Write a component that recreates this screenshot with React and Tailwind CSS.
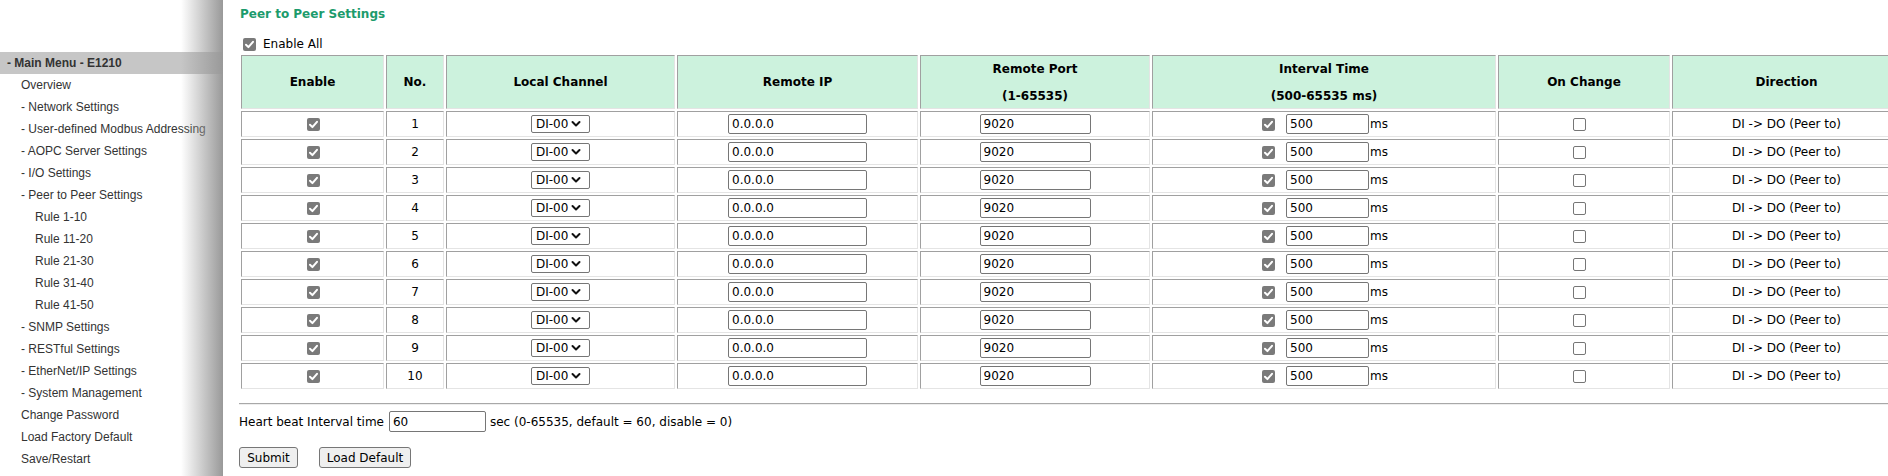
const menu = [
  { label: 'Overview', lvl: 1 },
  { label: '- Network Settings', lvl: 1 },
  { label: '- User-defined Modbus Addressing', lvl: 1 },
  { label: '- AOPC Server Settings', lvl: 1 },
  { label: '- I/O Settings', lvl: 1 },
  { label: '- Peer to Peer Settings', lvl: 1 },
  { label: 'Rule 1-10', lvl: 2 },
  { label: 'Rule 11-20', lvl: 2 },
  { label: 'Rule 21-30', lvl: 2 },
  { label: 'Rule 31-40', lvl: 2 },
  { label: 'Rule 41-50', lvl: 2 },
  { label: '- SNMP Settings', lvl: 1 },
  { label: '- RESTful Settings', lvl: 1 },
  { label: '- EtherNet/IP Settings', lvl: 1 },
  { label: '- System Management', lvl: 1 },
  { label: 'Change Password', lvl: 1 },
  { label: 'Load Factory Default', lvl: 1 },
  { label: 'Save/Restart', lvl: 1 },
]

const rules = Array.from({ length: 10 }, (_, i) => i + 1)

/* ============ FORM BITS ============ */
function Check({ on = true, className = '' }) {
  if (!on) {
    return <span className={`inline-block h-[13px] w-[13px] shrink-0 rounded-[2px] border border-[#767676] bg-white ${className}`} />
  }
  return (
    <span className={`inline-flex h-[13px] w-[13px] shrink-0 items-center justify-center rounded-[2px] bg-[#7a7a7a] ${className}`}>
      <svg width="13" height="13" viewBox="0 0 13 13" fill="none">
        <path d="M3 6.8 L5.4 9.1 L10 3.8" stroke="white" strokeWidth="2" strokeLinecap="round" strokeLinejoin="round" />
      </svg>
    </span>
  )
}

function Field({ value, className = '' }) {
  return (
    <input
      readOnly
      value={value}
      className={`h-[20px] rounded-[2px] border border-[#767676] bg-white pl-[3px] text-[12px] text-black outline-none ${className}`}
    />
  )
}

function Select() {
  return (
    <div className="inline-flex h-[18px] w-[59px] items-center rounded-[2px] border border-[#767676] bg-white pl-[4px] text-[12px] text-black">
      <span>DI-00</span>
      <svg className="ml-[3px]" width="10" height="8" viewBox="0 0 10 8" fill="none">
        <path d="M1.5 2 L5 5.5 L8.5 2" stroke="#111" strokeWidth="2" strokeLinecap="round" strokeLinejoin="round" />
      </svg>
    </div>
  )
}

const th = 'h-[54px] p-0 bg-[#ccf2dd] border border-t-[#a0a0a0] border-l-[#a0a0a0] border-r-[#e4e4e4] border-b-[#e4e4e4] text-center align-middle font-bold text-[12px] text-black'
const td = 'h-[26px] p-0 border border-t-[#a0a0a0] border-l-[#a0a0a0] border-r-[#e4e4e4] border-b-[#e4e4e4] text-center align-middle text-[12px] text-black'

function TwoLine({ a, b }) {
  return (
    <div className="flex flex-col items-center leading-[14px]">
      <span>{a}</span>
      <span className="mt-[13px]">{b}</span>
    </div>
  )
}

/* ============ SIDEBAR ============ */
function Sidebar() {
  return (
    <aside className="relative h-full w-[223px] shrink-0 bg-white font-['Liberation_Sans',Arial,sans-serif] text-[12px] text-[#333]">
      <div className="mt-[52px] flex h-[22px] items-center bg-[#c6c6c6] pl-[7px] font-bold">- Main Menu - E1210</div>
      <ul>
        {menu.map((m) => (
          <li key={m.label} className={`flex h-[22px] items-center ${m.lvl === 2 ? 'pl-[35px]' : 'pl-[21px]'}`}>
            {m.label}
          </li>
        ))}
      </ul>
      <div className="pointer-events-none absolute inset-y-0 right-0 w-[42px] bg-gradient-to-r from-[#99999900] to-[#999999]" />
    </aside>
  )
}

/* ============ MAIN ============ */
export default function App() {
  return (
    <div className="flex h-[476px] w-[1888px] overflow-hidden bg-white">
      <Sidebar />
      <main className="min-w-0 flex-1 pl-[16px] font-['DejaVu_Sans',Verdana,sans-serif] text-[12px] text-black">
        <h1 className="flex h-[28px] items-center pl-[1px] text-[12px] font-bold text-[#1c9b6c]">Peer to Peer Settings</h1>
        <div className="mt-[7px] flex h-[18px] items-center">
          <Check className="ml-[4px]" />
          <span className="ml-[7px]">Enable All</span>
        </div>

        <table className="table-fixed border-separate border-spacing-[2px] w-[1664px]">
          <thead>
            <tr>
              <th className={`${th} w-[143px]`}>Enable</th>
              <th className={`${th} w-[58px]`}>No.</th>
              <th className={`${th} w-[229px]`}>Local Channel</th>
              <th className={`${th} w-[241px]`}>Remote IP</th>
              <th className={`${th} w-[230px]`}><TwoLine a="Remote Port" b="(1-65535)" /></th>
              <th className={`${th} w-[344px]`}><TwoLine a="Interval Time" b="(500-65535 ms)" /></th>
              <th className={`${th} w-[172px]`}>On Change</th>
              <th className={`${th} w-[229px]`}>Direction</th>
            </tr>
          </thead>
          <tbody>
            {rules.map((n) => (
              <tr key={n}>
                <td className={td}>
                  <div className="flex items-center justify-center pl-[2px]"><Check /></div>
                </td>
                <td className={td}>{n}</td>
                <td className={td}>
                  <div className="flex items-center justify-center"><Select /></div>
                </td>
                <td className={td}>
                  <div className="flex items-center justify-center"><Field value="0.0.0.0" className="w-[139px]" /></div>
                </td>
                <td className={td}>
                  <div className="flex items-center justify-center"><Field value="9020" className="w-[111px]" /></div>
                </td>
                <td className={td}>
                  <div className="flex items-center justify-center pl-[2px]">
                    <Check className="mr-[11px]" />
                    <Field value="500" className="w-[83px]" />
                    <span className="ml-[1px]">ms</span>
                  </div>
                </td>
                <td className={td}>
                  <div className="flex items-center justify-center pr-[10px]"><Check on={false} /></div>
                </td>
                <td className={td}>DI -&gt; DO (Peer to)</td>
              </tr>
            ))}
          </tbody>
        </table>

        <div className="mt-[12px] h-[2px] border-t border-t-[#a8a8a8] border-b border-b-[#eeeeee]" />

        <div className="mt-[6px] flex h-[21px] items-center">
          <span>Heart beat Interval time</span>
          <Field value="60" className="ml-[5px] h-[21px] w-[97px]" />
          <span className="ml-[4px]">sec (0-65535, default = 60, disable = 0)</span>
        </div>

        <div className="mt-[15px] flex items-center">
          <button className="h-[21px] w-[59px] rounded-[3px] border border-[#767676] bg-[#efefef] text-[12px] text-black">Submit</button>
          <button className="ml-[21px] h-[21px] w-[92px] rounded-[3px] border border-[#767676] bg-[#efefef] text-[12px] text-black">Load Default</button>
        </div>
      </main>
    </div>
  )
}
